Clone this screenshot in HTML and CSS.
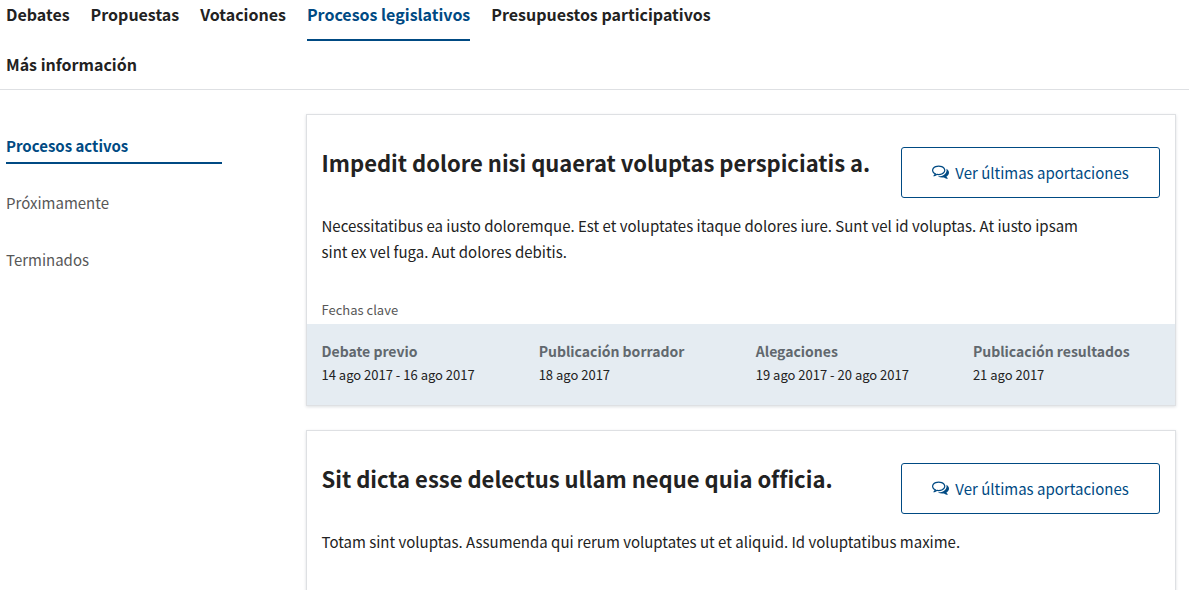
FILE: index.html
```html
<!DOCTYPE html>
<html lang="es">
<head>
<meta charset="utf-8">
<meta name="viewport" content="width=device-width, initial-scale=1">
<title>Procesos legislativos</title>
<link rel="stylesheet" href="styles.css">
</head>
<body>
<nav class="main-nav" aria-label="Principal">
  <a href="#">Debates</a>
  <a href="#">Propuestas</a>
  <a href="#">Votaciones</a>
  <a href="#" class="active" aria-current="page">Procesos legislativos</a>
  <a href="#">Presupuestos participativos</a>
  <a href="#">Más información</a>
</nav>
<div class="layout">
  <aside class="side">
    <a href="#" class="active">Procesos activos</a>
    <a href="#">Próximamente</a>
    <a href="#">Terminados</a>
  </aside>
  <main class="list">
    <article class="card">
      <div class="card-head">
        <h3>Impedit dolore nisi quaerat voluptas perspiciatis a.</h3>
        <a href="#" class="button">
          <svg class="icon" viewBox="0 0 1792 1792" aria-hidden="true"><path d="M704 384q-153 0-286 52t-211.500 141-78.500 191q0 82 53 158t149 132l97 56-35 84q34-20 62-39l44-31 53 10q78 14 153 14 153 0 286-52t211.500-141 78.500-191-78.500-191-211.500-141-286-52zm0-128q191 0 353.500 68.500t256.500 186.500 94 257-94 257-256.500 186.500-353.500 68.500q-86 0-176-16-124 88-278 128-36 9-86 16h-3q-11 0-20.500-8t-11.500-21q-1-3-1-6.500t.500-6.500 2-6l2.500-5 3.500-5.500 4-5 4.500-5 4-4.500q5-6 23-25t26-29.500 22.500-29 25-38.500 20.500-44q-124-72-195-177t-71-224q0-139 94-257t256.500-186.500 353.500-68.500zm822 1169q10 24 20.500 44t25 38.500 22.500 29 26 29.500 23 25q1 1 4 4.500t4.500 5 4 5 3.500 5.500l2.500 5 2 6 .500 6.500-1 6.500q-3 14-13 22t-22 7q-50-7-86-16-154-40-278-128-90 16-176 16-271 0-472-132 58 4 88 4 161 0 309-45t264-129q125-92 192-212t67-254q0-77-23-152 129 71 204 178t75 230q0 120-71 224.500t-195 176.500z"/></svg>
          <span>Ver últimas aportaciones</span>
        </a>
      </div>
      <p class="summary">Necessitatibus ea iusto doloremque. Est et voluptates itaque dolores iure. Sunt vel id voluptas. At iusto ipsam sint ex vel fuga. Aut dolores debitis.</p>
      <p class="dates-title">Fechas clave</p>
      <dl class="dates">
        <div><dt>Debate previo</dt><dd>14 ago 2017 - 16 ago 2017</dd></div>
        <div><dt>Publicación borrador</dt><dd>18 ago 2017</dd></div>
        <div><dt>Alegaciones</dt><dd>19 ago 2017 - 20 ago 2017</dd></div>
        <div><dt>Publicación resultados</dt><dd>21 ago 2017</dd></div>
      </dl>
    </article>
    <article class="card">
      <div class="card-head">
        <h3>Sit dicta esse delectus ullam neque quia officia.</h3>
        <a href="#" class="button">
          <svg class="icon" viewBox="0 0 1792 1792" aria-hidden="true"><path d="M704 384q-153 0-286 52t-211.500 141-78.500 191q0 82 53 158t149 132l97 56-35 84q34-20 62-39l44-31 53 10q78 14 153 14 153 0 286-52t211.500-141 78.500-191-78.500-191-211.500-141-286-52zm0-128q191 0 353.500 68.500t256.500 186.500 94 257-94 257-256.500 186.500-353.500 68.500q-86 0-176-16-124 88-278 128-36 9-86 16h-3q-11 0-20.500-8t-11.500-21q-1-3-1-6.500t.500-6.500 2-6l2.500-5 3.500-5.500 4-5 4.500-5 4-4.500q5-6 23-25t26-29.500 22.500-29 25-38.500 20.500-44q-124-72-195-177t-71-224q0-139 94-257t256.500-186.500 353.500-68.500zm822 1169q10 24 20.500 44t25 38.500 22.500 29 26 29.500 23 25q1 1 4 4.500t4.500 5 4 5 3.500 5.500l2.500 5 2 6 .500 6.500-1 6.500q-3 14-13 22t-22 7q-50-7-86-16-154-40-278-128-90 16-176 16-271 0-472-132 58 4 88 4 161 0 309-45t264-129q125-92 192-212t67-254q0-77-23-152 129 71 204 178t75 230q0 120-71 224.500t-195 176.500z"/></svg>
          <span>Ver últimas aportaciones</span>
        </a>
      </div>
      <p class="summary">Totam sint voluptas. Assumenda qui rerum voluptates ut et aliquid. Id voluptatibus maxime.</p>
    </article>
  </main>
</div>
</body>
</html>
```

FILE: styles.css
```css
* { box-sizing: border-box; }
html { scrollbar-width: none; }
body {
  margin: 0;
  background: #fff;
  color: #222;
  font-family: "Noto Sans CJK SC", "Noto Sans", sans-serif;
  font-size: 15px;
  line-height: 26px;
  font-variant-ligatures: none;
}
a { color: #004a83; text-decoration: none; }
h3, p, dl, dd { margin: 0; }

.main-nav {
  display: flex;
  flex-wrap: wrap;
  column-gap: 21px;
  row-gap: 10px;
  padding: 1px 400px 12px 6px;
  border-bottom: 1px solid #dee0e3;
}
.main-nav a {
  color: #222;
  font-size: 16px;
  font-weight: 700;
  padding-bottom: 12px;
  border-bottom: 2px solid transparent;
}
.main-nav a:last-child { padding-bottom: 0; border-bottom: 0; }
.main-nav .active { color: #004a83; border-color: #004a83; }

.layout {
  display: grid;
  grid-template-columns: minmax(0, 1fr) minmax(0, 3fr);
  padding: 24px 13px 24px 6px;
}
.side {
  display: flex;
  flex-direction: column;
  gap: 26px;
  padding-top: 19px;
  margin-right: 77px;
}
.side a {
  color: #575757;
  padding-bottom: 3px;
  border-bottom: 2px solid transparent;
}
.side .active {
  color: #004a83;
  font-weight: 700;
  border-color: #004a83;
}
.list { display: flex; flex-direction: column; gap: 24px; margin-left: 7px; }
.card {
  min-height: 292px;
  border: 1px solid #dee0e3;
  box-shadow: 0 1px 3px #dee0e3;
}
.card-head {
  display: flex;
  align-items: flex-start;
  justify-content: space-between;
  padding: 32px 15px 0;
}
.card h3 { font-size: 22px; line-height: 30px; font-weight: 700; }
.button {
  display: flex;
  align-items: center;
  justify-content: center;
  gap: 6px;
  padding: 11px 28px;
  border: 1px solid #004a83;
  border-radius: 3px;
  white-space: nowrap;
  min-width: 259px;
  min-height: 51px;
}
.icon { width: 17px; height: 17px; margin-bottom: 3px; fill: currentColor; }
.summary { padding: 15px 90px 0 15px; }
.dates-title { padding: 31px 15px 0; font-size: 13px; line-height: 28px; color: #575757; }
.dates {
  display: grid;
  grid-template-columns: repeat(4, 1fr);
  padding: 15px 0 18px;
  background: #e5ecf2;
}
.dates div { padding-left: 15px; }
.dates dt { font-size: 14px; line-height: 24px; font-weight: 700; color: #61686e; }
.dates dd { font-size: 13px; line-height: 24px; }
```
